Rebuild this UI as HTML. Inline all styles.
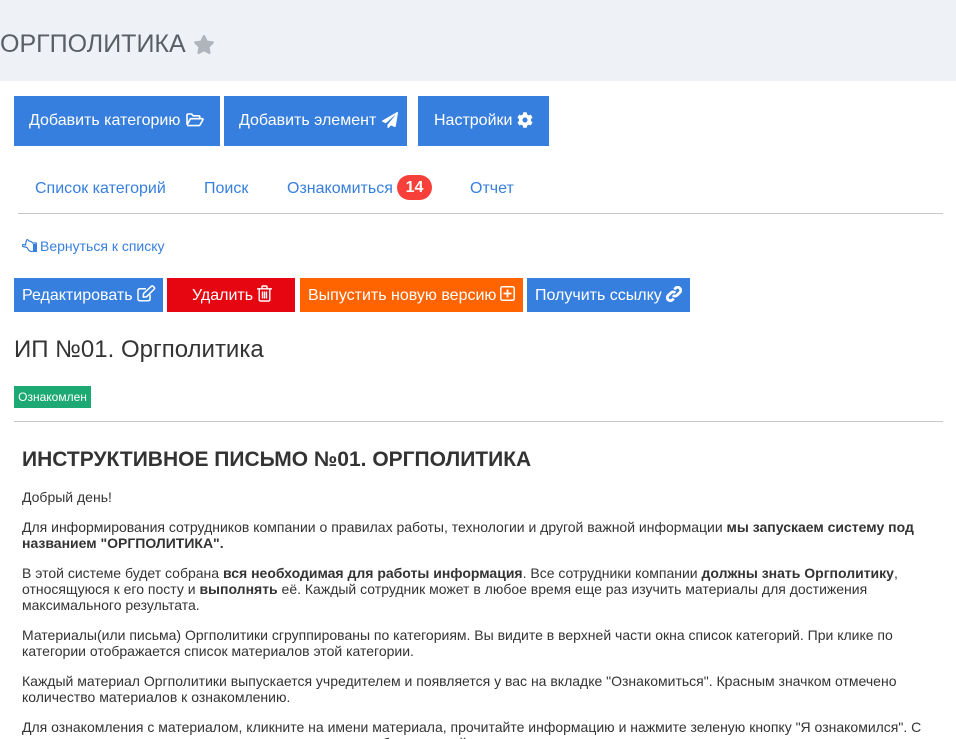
<!DOCTYPE html>
<html lang="ru"><head><meta charset="utf-8"><title>ОРГПОЛИТИКА</title>
<style>
html,body{margin:0;padding:0;background:#fff;width:956px;height:739px;overflow:hidden}
#w{position:absolute;left:0;top:0;width:956px;height:739px;overflow:hidden;font-family:"Liberation Sans",sans-serif;color:#333}
.a{position:absolute;white-space:nowrap}
.btn{position:absolute;color:#fff;box-sizing:border-box;white-space:nowrap;font-size:16px}
.blue{background:#377fde}
svg{position:absolute;fill:#fff}
.lnk{color:#377fde;font-size:16px;top:180px;line-height:18px}
p{position:absolute;left:22px;margin:0;font-size:14px;line-height:16px;width:915px;white-space:nowrap;color:#333}
</style></head><body><div id="w">
<div class="a" style="left:0;top:0;width:956px;height:81px;background:#eef1f5"></div>
<div class="a" style="left:0;top:29px;font-size:25px;line-height:30px;color:#5a5f66">ОРГПОЛИТИКА</div>
<svg style="left:193px;top:35px;fill:#b0b5bb" width="22" height="19" viewBox="0 0 576 512"><path d="M259.3 17.8L194 150.2 47.9 171.5c-26.2 3.8-36.7 36.1-17.7 54.6l105.7 103-25 145.5c-4.5 26.3 23.2 46 46.4 33.7L288 439.6l130.7 68.7c23.2 12.2 50.9-7.4 46.4-33.7l-25-145.5 105.7-103c19-18.5 8.5-50.8-17.7-54.6L382 150.2 316.7 17.8c-11.7-23.6-45.6-23.9-57.4 0z"/></svg>

<div class="btn blue" style="left:14px;top:96px;width:206px;height:50px;padding:16px 0 0 15px;line-height:18px">Добавить категорию</div>
<svg style="left:186px;top:113px;fill:none;stroke:#fff;stroke-width:1.6;stroke-linejoin:round" width="18" height="14" viewBox="0 0 18 14"><path d="M1 12V2.2C1 1.5 1.5 1 2.2 1h3.4l1.6 1.8h5.4c.7 0 1.2.5 1.2 1.2v1.4"/><path d="M1.2 12.6h11.6c.5 0 1-.3 1.200-.7l2.900-5c.3-.6 0-1.200-.7-1.200H5.200c-.5 0-1 .3-1.200.7l-2.800 5.400"/></svg>

<div class="btn blue" style="left:224px;top:96px;width:183px;height:50px;padding:16px 0 0 15px;line-height:18px">Добавить элемент</div>
<svg style="left:382px;top:112px" width="16" height="16" viewBox="0 0 512 512"><path d="M476 3.2L12.5 270.6c-18.1 10.4-15.8 35.6 2.2 43.2L121 358.4l287.3-253.2c5.5-4.9 13.3 2.6 8.6 8.3L176 407v80.5c0 23.6 28.5 32.9 42.5 15.8L282 426l124.6 52.2c14.2 6 30.4-2.9 33-18.2l72-432C515 7.8 493.3-6.8 476 3.2z"/></svg>

<div class="btn blue" style="left:418px;top:96px;width:131px;height:50px;padding:16px 0 0 16px;line-height:18px">Настройки</div>
<svg style="left:517px;top:112px" width="16" height="16" viewBox="0 0 512 512"><path d="M487.4 315.7l-42.6-24.6c4.3-23.2 4.3-47 0-70.2l42.6-24.6c4.9-2.8 7.1-8.6 5.5-14-11.1-35.6-30-67.8-54.7-94.6-3.8-4.1-10-5.1-14.8-2.3L380.8 110c-17.9-15.4-38.5-27.3-60.8-35.1V25.8c0-5.6-3.9-10.5-9.4-11.7-36.7-8.2-74.3-7.8-109.2 0-5.5 1.2-9.4 6.1-9.4 11.7V75c-22.2 7.9-42.8 19.8-60.8 35.1L88.7 85.5c-4.9-2.8-11-1.9-14.8 2.3-24.7 26.7-43.6 58.9-54.7 94.6-1.7 5.4.6 11.2 5.5 14L67.3 221c-4.3 23.2-4.3 47 0 70.2l-42.6 24.6c-4.9 2.8-7.1 8.6-5.5 14 11.1 35.6 30 67.8 54.7 94.6 3.8 4.1 10 5.1 14.8 2.3l42.6-24.6c17.9 15.4 38.5 27.3 60.8 35.1v49.2c0 5.6 3.9 10.5 9.4 11.7 36.7 8.2 74.3 7.8 109.2 0 5.5-1.2 9.4-6.1 9.4-11.7v-49.2c22.2-7.9 42.8-19.8 60.8-35.1l42.6 24.6c4.9 2.8 11 1.9 14.8-2.3 24.7-26.7 43.6-58.9 54.7-94.6 1.5-5.5-.7-11.3-5.6-14.1zM256 336c-44.1 0-80-35.9-80-80s35.9-80 80-80 80 35.9 80 80-35.9 80-80 80z"/></svg>

<div class="a lnk" style="left:35px">Список категорий</div>
<div class="a lnk" style="left:204px">Поиск</div>
<div class="a lnk" style="left:287px">Ознакомиться</div>
<div class="a" style="left:397px;top:175px;width:35px;height:25px;border-radius:13px;background:#f8403a;color:#fff;font-weight:bold;font-size:16px;line-height:26px;text-align:center">14</div>
<div class="a lnk" style="left:470px">Отчет</div>
<div class="a" style="left:18px;top:213px;width:925px;height:1px;background:#c8c8c8"></div>

<svg style="left:22px;top:239px;fill:#377fde" width="15" height="13" viewBox="0 0 15 13"><path d="M5.500.5L7 2l2.500.6 1 1.400H14c.6 0 1 .4 1 1v6.500c0 .6-.4 1-1 1H8.500L6.500 11 5 8.500 1 7.500C.3 7.300 0 6.800.2 6.200.4 5.700 1 5.500 1.500 5.600L3.500 6 4 3 4.700 1z" fill="none" stroke="#377fde" stroke-width="1.200"/><rect x="11" y="5" width="4" height="7.500"/></svg>
<div class="a" style="left:40px;top:237px;font-size:14px;line-height:18px;color:#377fde">Вернуться к списку</div>

<div class="btn blue" style="left:14px;top:278px;width:149px;height:34px;padding:9px 0 0 8px;line-height:18px">Редактировать</div>
<svg style="left:137px;top:285px;fill:none;stroke:#fff;stroke-width:1.500" width="19" height="17" viewBox="0 0 19 17"><path d="M13 9.500V14c0 1-.7 1.700-1.700 1.700H2.700C1.700 15.700 1 15 1 14V5.500c0-1 .7-1.700 1.700-1.700H9"/><path d="M6.500 8.500L14.500 1.200c.5-.4 1.100-.4 1.500 0l1.300 1.300c.4.500.4 1.100 0 1.500L9.500 11.800l-3.300.3z" stroke-linejoin="round"/></svg>

<div class="a" style="left:167px;top:278px;width:128px;height:34px;background:#e60611"></div>
<div class="btn" style="left:192px;top:287px;line-height:18px">Удалить</div>
<svg style="left:257px;top:285px;fill:none;stroke:#fff;stroke-width:1.400" width="15" height="17" viewBox="0 0 15 17"><path d="M0 3.800h15M5 3.500V2c0-.6.400-1 1-1h3c.6 0 1 .4 1 1v1.500M2.200 4v10.500c0 .9.500 1.500 1.300 1.500h8c.8 0 1.300-.6 1.300-1.500V4M5.500 6.500v7M7.500 6.500v7M9.500 6.500v7"/></svg>

<div class="a" style="left:300px;top:278px;width:223px;height:34px;background:#ff6400"></div>
<div class="btn" style="left:308px;top:287px;line-height:18px">Выпустить новую версию</div>
<svg style="left:500px;top:286px;fill:none;stroke:#fff;stroke-width:1.500" width="15" height="15" viewBox="0 0 15 15"><rect x=".8" y=".8" width="13.400" height="13.400" rx="1.500"/><path d="M7.500 3.500v8M3.500 7.500h8" stroke-width="1.800"/></svg>

<div class="btn blue" style="left:527px;top:278px;width:163px;height:34px;padding:9px 0 0 8px;line-height:18px">Получить ссылку</div>
<svg style="left:666px;top:286px;fill:none;stroke:#fff;stroke-width:2.800" width="16" height="16" viewBox="0 0 16 16"><path d="M6.800 9.200a3 3 0 0 0 4.300 0l2.700-2.700a3 3 0 0 0-4.300-4.300L8.300 3.400"/><path d="M9.200 6.800a3 3 0 0 0-4.300 0L2.200 9.500a3 3 0 0 0 4.300 4.300l1.200-1.200"/></svg>

<div class="a" style="left:14px;top:335px;font-size:24px;line-height:30px;color:#333">ИП №01. Оргполитика</div>
<div class="a" style="left:14px;top:386px;width:77px;height:22px;background:#1caa72;color:#fff;font-size:12px;line-height:23px;text-align:center">Ознакомлен</div>
<div class="a" style="left:14px;top:421px;width:929px;height:1px;background:#c8c8c8"></div>

<div class="a" style="left:22px;top:447px;font-size:21px;line-height:26px;font-weight:bold;color:#333">ИНСТРУКТИВНОЕ ПИСЬМО №01. ОРГПОЛИТИКА</div>
<p style="top:489px">Добрый день!</p>
<p style="top:519px">Для информирования сотрудников компании о правилах работы, технологии и другой важной информации <b>мы запускаем систему под<br>названием "ОРГПОЛИТИКА".</b></p>
<p style="top:565px">В этой системе будет собрана <b>вся необходимая для работы информация</b>. Все сотрудники компании <b>должны знать Оргполитику</b>,<br>относящуюся к его посту и <b>выполнять</b> её. Каждый сотрудник может в любое время еще раз изучить материалы для достижения<br>максимального результата.</p>
<p style="top:627px">Материалы(или письма) Оргполитики сгруппированы по категориям. Вы видите в верхней части окна список категорий. При клике по<br>категории отображается список материалов этой категории.</p>
<p style="top:673px">Каждый материал Оргполитики выпускается учредителем и появляется у вас на вкладке "Ознакомиться". Красным значком отмечено<br>количество материалов к ознакомлению.</p>
<p style="top:719px">Для ознакомления с материалом, кликните на имени материала, прочитайте информацию и нажмите зеленую кнопку "Я ознакомился". С</p>
<div class="a" style="left:382px;top:735px;font-size:14px;line-height:16px">б</div>
<div class="a" style="left:459px;top:735px;font-size:14px;line-height:16px">й</div>
</div></body></html>
